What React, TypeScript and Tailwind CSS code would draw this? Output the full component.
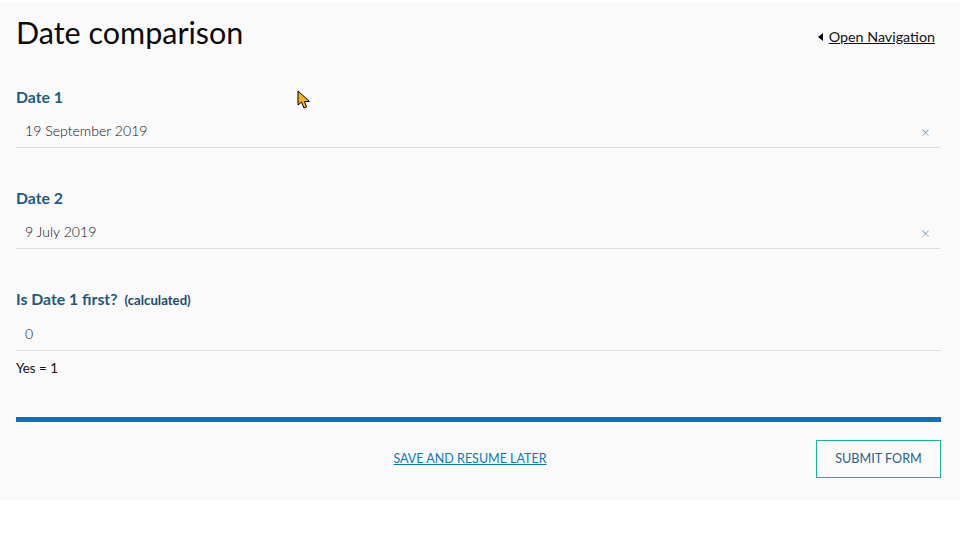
export default function App() {
  const f = { fontFamily: '"Lato", sans-serif' };
  return (
    <div className="w-[960px] h-[540px] bg-white overflow-hidden relative" style={f}>
      <div className="h-[499px] mt-px bg-[#fafafa] pl-4 pr-5 flex flex-col">
        <div className="flex justify-between items-start h-[79px] pr-[5px]">
          <h1 className="text-[30.5px] leading-[40px] mt-[11px] text-[#0a0a0a]">Date comparison</h1>
          <div className="flex items-center gap-[6px] mt-[27px] text-[14.3px] leading-[18px] text-[#111]">
            <span className="w-0 h-0 border-y-[4px] border-y-transparent border-r-[5px] border-r-black" />
            <a className="underline">Open Navigation</a>
          </div>
        </div>
        <Field label="Date 1" value="19 September 2019" clear />
        <div className="h-[33px]" />
        <Field label="Date 2" value="9 July 2019" clear />
        <div className="h-[33px]" />
        <div className="flex items-baseline gap-[7px] h-[34px] pt-[7px] leading-[20px]">
          <span className="text-[15.8px] font-bold text-[#1d5a7f]">Is Date 1 first?</span>
          <span className="text-[13.2px] font-bold text-[#1d4a66]">(calculated)</span>
        </div>
        <div className="h-[35px] border-b border-[#ddd] px-[9px] flex items-center text-[14px] font-light text-[#111] mr-[-1px]">0</div>
        <div className="text-[13.3px] leading-[18px] mt-[8px] text-[#111]">Yes = 1</div>
        <div className="h-[5px] bg-[#0077b3] mt-[40px] mr-[-1px]" />
        <div className="flex items-center mt-[18px] mr-[-1px]">
          <a className="flex-1 text-center underline text-[12.5px] text-[#0a7ab5] pl-[108px]">SAVE AND RESUME LATER</a>
          <button className="w-[125px] h-[38px] border border-[#14b5a0] text-[12.6px] text-[#24628a]">SUBMIT FORM</button>
        </div>
      </div>
      <svg className="absolute left-[297px] top-[90px]" width="14" height="20" viewBox="0 0 14 20">
        <path d="M1 1 L1 15 L4.5 12 L7 18 L9.5 17 L7.5 11.5 L12.5 11.5 Z" fill="#f9ae1b" stroke="#000" strokeWidth="1" />
      </svg>
    </div>
  );
}

function Field({ label, value, clear }: { label: string; value: string; clear?: boolean }) {
  return (
    <div>
      <div className="h-[33px] text-[15.8px] font-bold text-[#1d5a7f] leading-[20px] pt-[7px]">{label}</div>
      <div className="h-[35px] border-b border-[#ddd] pl-[9px] pr-[10px] flex items-center justify-between text-[14.1px] font-light text-[#111] pt-[2px]">
        <span className="mt-[-1px]">{value}</span>
        {clear && <span className="text-[16px] leading-[20px] text-[#5b7f95] mt-[1px]">×</span>}
      </div>
    </div>
  );
}
